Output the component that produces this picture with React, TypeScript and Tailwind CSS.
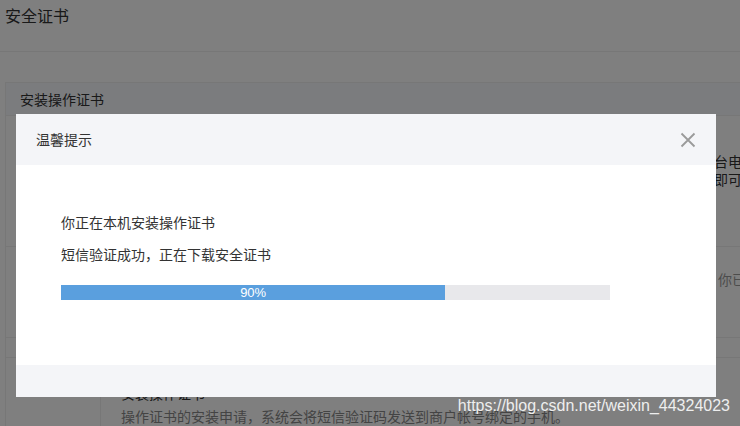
import React from "react";

const font = "font-['Microsoft_YaHei','Noto_Sans_CJK_SC',sans-serif]";

const CertificatePage: React.FC = () => {
  return (
    <div className="flex flex-col">
      <div className="h-[52px] border-b border-[#eeeeee] px-[5px] pt-[4px]">
        <h1 className="text-[16px] leading-[22px] text-[#333333]">安全证书</h1>
      </div>

      <div className="mt-[30px] ml-[5px] w-[760px] border border-[#eeeeee]">
        <div className="h-[33px] bg-[#f6f8fc] border-b border-[#eeeeee] pl-[14px] flex items-center">
          <span className="text-[14px] text-[#333333]">安装操作证书</span>
        </div>

        <div className="pl-[36px] pt-[36px] h-[131px] border-b border-[#eeeeee] text-[14px] leading-[18px] text-[#333333] whitespace-nowrap">
          <p>操作证书是您使用商户平台进行资金操作的安全凭证，安装后只有在已安装证书的电脑上才能操作，请选择一台电脑安装。</p>
          <p>安装时需要输入短信验证码，验证通过后系统将自动下载并安装证书，整个过程约需一分钟，完成后刷新页面即可使用。</p>
        </div>

        <div className="pl-[40px] pt-[22px] h-[91px] border-b border-[#eeeeee] text-[14px] leading-[20px] text-[#999999] whitespace-nowrap">
          <p>本机证书状态检测中，请稍候，检测完成后将显示当前电脑的证书安装情况及有效期等相关信息，如有疑问，你已安装过操作证书</p>
        </div>

        <div className="h-[20px] border-b border-[#eeeeee]" />

        <div className="flex h-[120px]">
          <div className="w-[95px] border-r border-[#eeeeee]" />
          <div className="pl-[20px] pt-[25px] text-[14px] whitespace-nowrap">
            <p className="leading-[20px] text-[#333333]">安装操作证书</p>
            <p className="mt-[3px] leading-[20px] text-[#888888]">操作证书的安装申请，系统会将短信验证码发送到商户帐号绑定的手机。</p>
          </div>
        </div>
      </div>
    </div>
  );
};

const ProgressBar: React.FC<{ percent: number; label: string }> = ({ percent, label }) => (
  <div className="w-[549px] h-[15px] bg-[#e8e8eb]">
    <div
      className="h-full bg-[#5a9fde] flex items-center justify-center"
      style={{ width: `${percent}%` }}
    >
      <span className="font-['Liberation_Sans',sans-serif] text-[13px] leading-[15px] text-white">{label}</span>
    </div>
  </div>
);

const InstallDialog: React.FC = () => (
  <div className="absolute left-[16px] top-[114px] w-[700px] bg-white flex flex-col">
    <div className="h-[51px] bg-[#f4f5f8] flex items-center justify-between pl-[20px] pr-[20px]">
      <span className="text-[14px] text-[#333333]">温馨提示</span>
      <button className="w-[16px] h-[16px]">
        <svg viewBox="0 0 16 16" width="16" height="16">
          <path d="M1.5 1.5 L14.5 14.5 M14.5 1.5 L1.5 14.5" stroke="#9a9a9a" strokeWidth="1.8" fill="none" />
        </svg>
      </button>
    </div>
    <div className="h-[200px] pl-[45px] pt-[47px] text-[14px] leading-[20px] text-[#333333]">
      <p>你正在本机安装操作证书</p>
      <p className="mt-[12px]">短信验证成功，正在下载安全证书</p>
      <div className="mt-[21px]">
        <ProgressBar percent={70} label="90%" />
      </div>
    </div>
    <div className="h-[32px] bg-[#f4f5f8]" />
  </div>
);

export default function App() {
  return (
    <div className={`relative w-[740px] h-[426px] overflow-hidden bg-white ${font}`}>
      <CertificatePage />
      <div className="absolute inset-0 bg-black/50" />
      <InstallDialog />
      <div className="absolute right-[10px] top-[396px] font-['Liberation_Sans',sans-serif] text-[16px] leading-[20px] text-[#eeeeee]">
        https://blog.csdn.net/weixin_44324023
      </div>
    </div>
  );
}
